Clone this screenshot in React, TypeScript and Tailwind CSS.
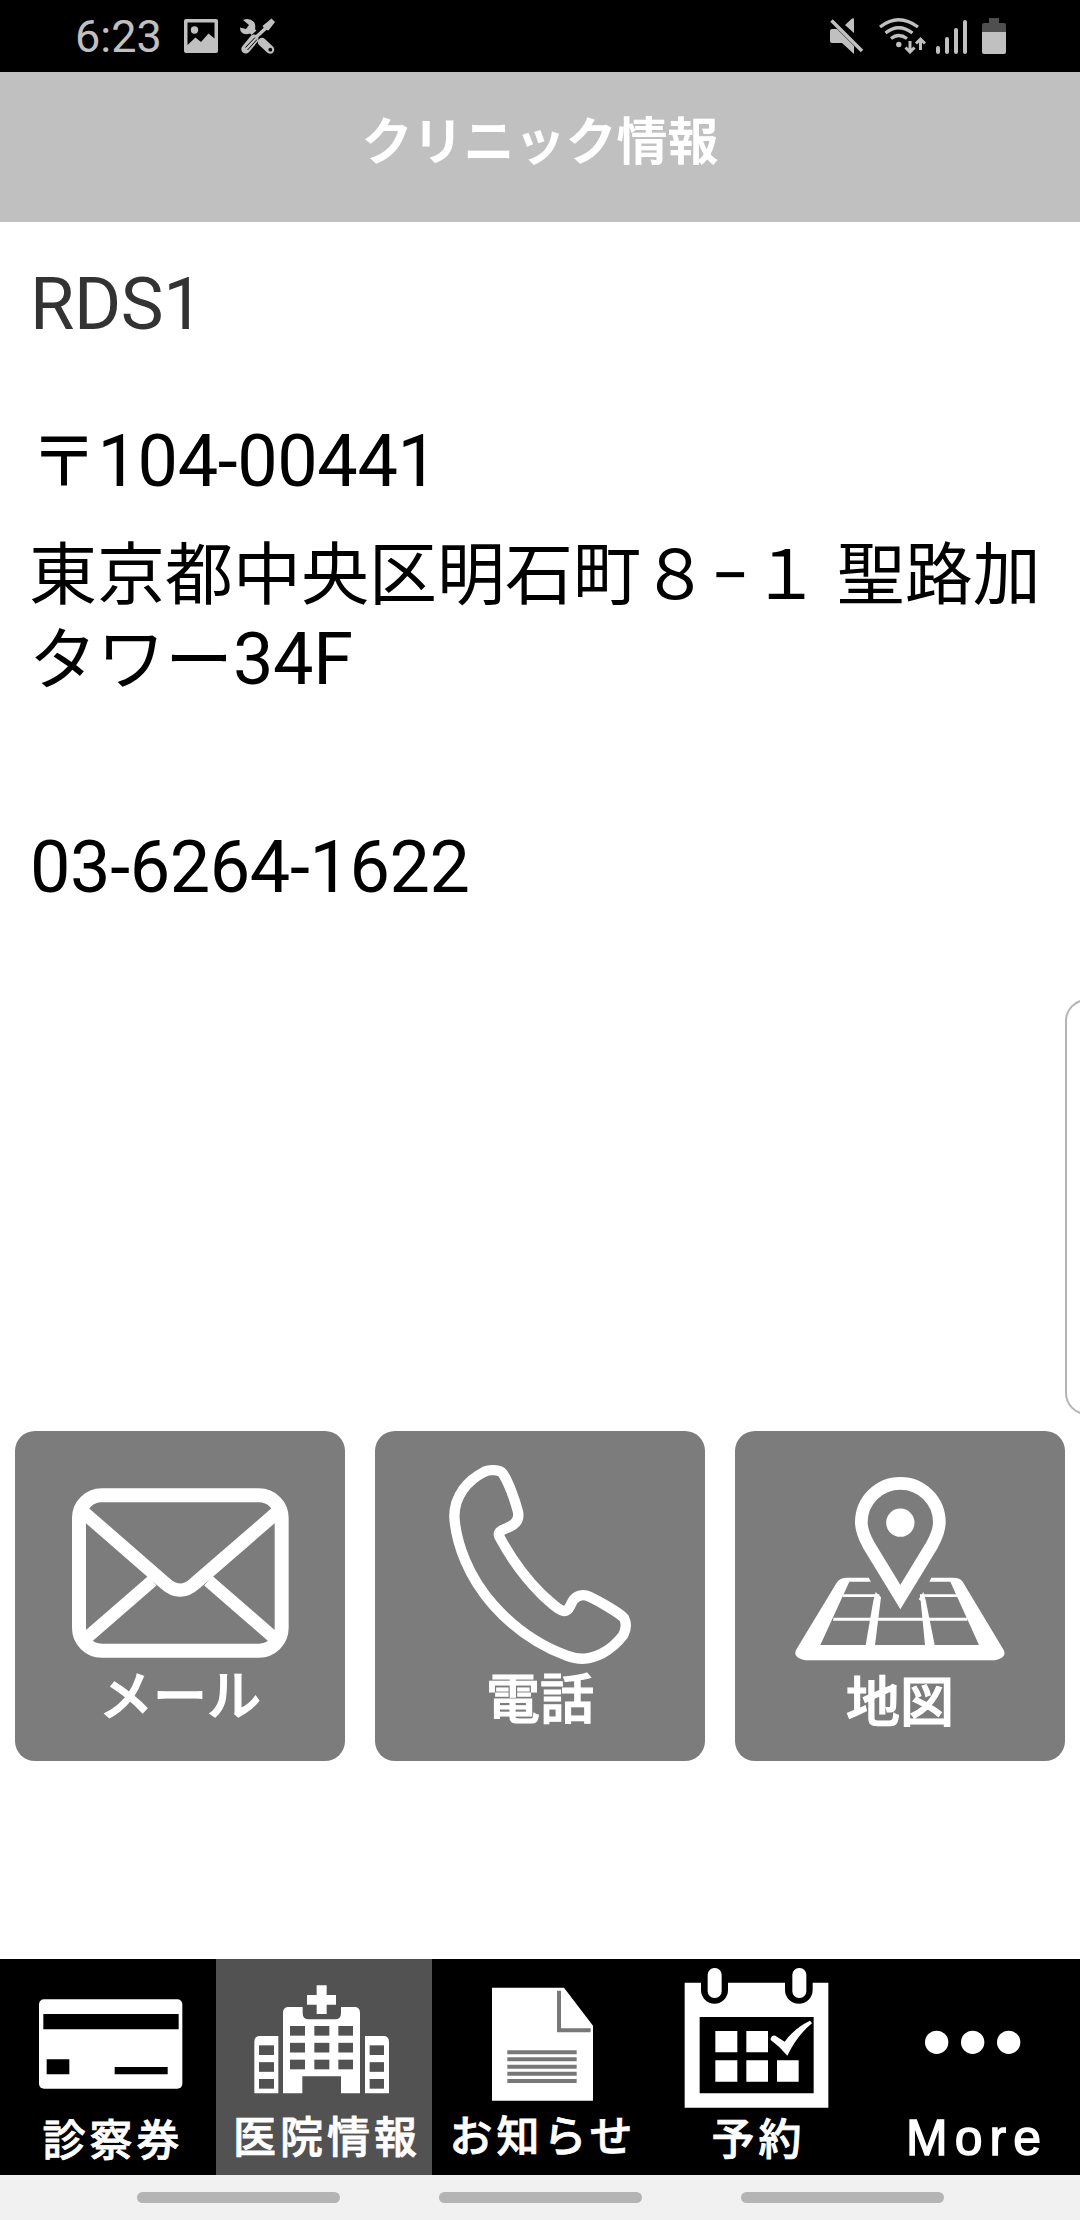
import type { ReactNode } from 'react';

const GRAY = '#c0c0c0';

function StatusBar() {
  return (
    <div className="flex h-[72px] items-center bg-black pl-[75px] pr-[74px]">
      <span className="w-[108px] pt-[2px] text-[45px] leading-[70px] text-[#c0c0c0]">6:23</span>
      {/* screenshot notification */}
      <svg width="36" height="36" viewBox="0 0 36 36" fill={GRAY}>
        <path
          fillRule="evenodd"
          d="M3 1H33Q35 1 35 3V33Q35 35 33 35H3Q1 35 1 33V3Q1 1 3 1ZM4.5 4.5V27L12.5 19.5L18 24L25.5 15.5L31.5 20.5V4.5Z"
        />
        <circle cx="11.5" cy="12" r="3.7" />
      </svg>
      {/* developer tools */}
      <svg width="37" height="37" viewBox="0 0 37 37" fill="none" className="ml-[20px]">
        <path d="M4 2Q10-1 15 4Q17 7 16 11L19 15L15 19L11 15.500Q5 18 1.500 13L1 9.500L7 11L10 7Z" fill={GRAY} />
        <path d="M23 24L31 31.500" stroke={GRAY} strokeWidth="8.500" strokeLinecap="round" />
        <circle cx="31.300" cy="31.700" r="1.900" fill="#000" />
        <path d="M14 21L31 6" stroke="#000" strokeWidth="8" />
        <path d="M6.800 31L15 21" stroke={GRAY} strokeWidth="9" strokeLinecap="round" />
        <path d="M15 21L27 10" stroke={GRAY} strokeWidth="3.500" />
        <path d="M26 11.500L23.500 8L32.500 .5L36 4L29.500 12.500Z" fill={GRAY} />
        <path d="M6.500 29.500L16 19.500M8.500 32L18 21.500" stroke="#000" strokeWidth="1" />
      </svg>
      <div className="ml-auto flex items-center">
        {/* muted */}
        <svg width="34" height="36" viewBox="0 0 34 36" fill={GRAY}>
          <path d="M0 13Q0 11 2 11H7L24 28V36L12 25H2Q0 25 0 23ZM15 7L22 .5H24V15Z" />
          <path d="M3 .5L34 31.500" stroke="#000" strokeWidth="3" />
          <path d="M1.500 2.500L32 33" stroke={GRAY} strokeWidth="3.500" />
        </svg>
        {/* wifi with traffic arrows */}
        <svg width="47" height="36" viewBox="0 0 47 36" fill="none" stroke={GRAY} strokeWidth="3.300" className="ml-[15px]">
          <path d="M1 9Q19.500-5.500 39 9M6.500 15Q19.500 4.500 33.500 15M12 20.500Q19.500 14.500 28 20.500" />
          <circle cx="19.800" cy="26.500" r="2.700" fill={GRAY} stroke="none" />
          <path d="M31 23V34M26.500 29.500L31 34L35.500 29.500M41.500 32V21M37 25.500L41.500 21L46 25.500" strokeWidth="3" />
        </svg>
        <svg width="31" height="36" viewBox="0 0 31 36" stroke={GRAY} strokeWidth="4" strokeLinecap="round" className="ml-[10px]">
          <path d="M2 30V34M11 21V34M20 12V34M29 4V34" />
        </svg>
        <svg width="24" height="36" viewBox="0 0 24 36" className="ml-[15px]">
          <path d="M7 0H17V5H22Q24 5 24 7V14H0V7Q0 5 2 5H7Z" fill="#4f4f4f" />
          <path d="M0 14H24V34Q24 36 22 36H2Q0 36 0 34Z" fill={GRAY} />
        </svg>
      </div>
    </div>
  );
}

function MailIcon() {
  return (
    <svg viewBox="45 63 990 720" className="h-[240px] w-[330px]" fill="none" stroke="#fff">
      <rect x="237" y="256" width="608" height="466" rx="68" strokeWidth="42" />
      <path d="M245 302L495 520Q540 561 585 520L837 302" strokeWidth="40" />
      <path d="M255 688L457 512M827 688L625 512" strokeWidth="38" />
    </svg>
  );
}

function PhoneIcon() {
  return (
    <svg viewBox="45 63 990 720" className="h-[240px] w-[330px]" fill="none" stroke="#fff">
      <path
        strokeWidth="31"
        strokeLinejoin="round"
        d="M372 186C325 210 283 255 283 320C288 400 325 500 400 585C480 675 560 715 620 737C660 752 690 748 725 731C755 715 775 695 790 675C800 655 800 640 792 624C780 610 720 575 688 560C668 550 650 558 640 570C630 585 628 603 612 603C600 603 580 585 545 553C500 508 450 440 418 380C412 365 425 360 445 352C470 342 478 325 474 305C465 270 445 215 428 190C420 178 385 178 372 186Z"
      />
    </svg>
  );
}

function MapIcon() {
  return (
    <svg viewBox="45 63 990 720" className="h-[240px] w-[330px]" fill="#fff">
      <path d="M541 561L446 405Q424 365 424 337A117 117 0 0 1 658 337Q658 365 636 405Z" fill="none" stroke="#fff" strokeWidth="38" />
      <circle cx="541" cy="338" r="42.500" />
      <path d="M378 503H446L453 515H388L301 705H777L691 515H628L634 503H700Q720 503 728 515L851 720Q862 742 825 751H255Q218 742 228 720L350 518Q358 505 378 503Z" />
      <path d="M370 553H478V561H368ZM600 553H712V561H600ZM341 623H742V632H339Z" />
      <path d="M467 546L483 562L465 705H437L460 572ZM596 568L610 546L617 570L644 705H615L602 572Z" />
    </svg>
  );
}

function CardIcon() {
  return (
    <svg viewBox="0 57 648 450" className="h-[150px] w-[216px]">
      <rect x="117" y="178" width="430" height="268" rx="15" fill="#fff" />
      <path d="M130 222H536V268H130ZM140 358H208V403H140ZM344 381H503V403H344Z" />
    </svg>
  );
}

function HospitalIcon() {
  const rows = [0, 1, 2];
  return (
    <svg viewBox="648 57 648 450" className="h-[150px] w-[216px]" fill="#fff">
      <path d="M849 460V218Q849 201 866 201H908V220Q908 238 926 238H1005Q1023 238 1023 220V201H1063Q1080 201 1080 218V460H1023V409H907V460Z" />
      <path d="M763 460V305Q763 288 780 288H835V460ZM1095 460V288H1150Q1167 288 1167 305V460Z" />
      <path d="M921 165H950V136H980V165H1008V194H980V222H950V194H921Z" />
      <g fill="#525252">
        {rows.map((r) => (
          <g key={r}>
            <rect x="870" y={258 + r * 50.5} width="45" height="29" />
            <rect x="943" y={258 + r * 50.5} width="45" height="29" />
            <rect x="1015" y={258 + r * 50.5} width="44" height="29" />
            <rect x="777" y={316 + r * 50.5} width="45" height="29" />
            <rect x="1109" y={316 + r * 50.5} width="43" height="29" />
          </g>
        ))}
      </g>
    </svg>
  );
}

function NewsIcon() {
  return (
    <svg viewBox="24 57 648 450" className="h-[150px] w-[216px]" fill="none">
      <path d="M204 143H420L507 257V482H204Z" fill="#fff" />
      <path d="M405 152V271H500M250 337H458M250 358H458M250 380H458M250 401H458M250 423H458" stroke="#787878" strokeWidth="12" />
    </svg>
  );
}

function CalendarIcon() {
  return (
    <svg viewBox="672 57 648 450" className="h-[150px] w-[216px]" fill="#fff">
      <path d="M782 128H1213V503H782Z" />
      <path d="M827 231H1169V460H827Z" fill="#000" />
      <path d="M831 120H912V150A40.500 41 0 0 1 831 150ZM1083 120H1166V150A41.500 41 0 0 1 1083 150Z" fill="#000" />
      <rect x="851" y="84" width="42" height="90" rx="20" />
      <rect x="1105" y="84" width="42" height="90" rx="20" />
      <path d="M874 273H940V337H874ZM967 273H1032V337H967ZM874 361H940V425H874ZM967 361H1032V425H967ZM1059 361H1124V425H1059Z" />
      <path d="M1040 296Q1044 284 1054 287L1082 305Q1112 264 1158 242L1164 250Q1120 285 1090 347Q1068 320 1040 300Z" />
    </svg>
  );
}

function MoreIcon() {
  return (
    <svg viewBox="342 57 648 450" className="h-[150px] w-[216px]" fill="#fff">
      <circle cx="560" cy="307" r="35" />
      <circle cx="668" cy="307" r="35" />
      <circle cx="776" cy="307" r="35" />
    </svg>
  );
}

const actions: { label: string; icon: ReactNode; cls: string }[] = [
  { label: 'メール', icon: <MailIcon />, cls: 'text-[54px]' },
  { label: '電話', icon: <PhoneIcon />, cls: 'text-[54px] pt-[3px]' },
  { label: '地図', icon: <MapIcon />, cls: 'text-[54px] pt-[6px]' },
];

const tabs: { label: string; icon: ReactNode; cls: string; active?: boolean }[] = [
  { label: '診察券', icon: <CardIcon />, cls: 'text-[43px] tracking-[4px] pl-[10px] pt-[5px] [-webkit-text-stroke:0.8px_white]' },
  { label: '医院情報', icon: <HospitalIcon />, cls: 'text-[43px] tracking-[4px] pl-[6px] pt-[2px] [-webkit-text-stroke:0.8px_white]', active: true },
  { label: 'お知らせ', icon: <NewsIcon />, cls: 'text-[43px] tracking-[4px] pl-[6px] pt-[1px] [-webkit-text-stroke:0.8px_white]' },
  { label: '予約', icon: <CalendarIcon />, cls: 'text-[43px] tracking-[4px] pl-[5px] pt-[4px] [-webkit-text-stroke:0.8px_white]' },
  {
    label: 'More',
    icon: <MoreIcon />,
    cls: "font-['Liberation_Sans',sans-serif] text-[50px] tracking-[7px] pl-[10px] pt-[2px] [-webkit-text-stroke:1.4px_white]",
  },
];

export default function App() {
  return (
    <div className="relative flex h-[2220px] w-[1080px] flex-col overflow-hidden bg-white font-[Roboto,'Noto_Sans_CJK_JP',sans-serif]">
      <StatusBar />
      <header className="flex h-[150px] justify-center bg-[#c0c0c0] pt-[34px]">
        <h1 className="text-[51px] font-bold leading-[74px] text-white">クリニック情報</h1>
      </header>

      <main className="flex flex-1 flex-col">
        <section className="h-[1209px] pl-[30px] pt-[41px] text-[72px] leading-[84px] tracking-[-0.4px] text-black">
          <p className="text-[#333]">RDS1</p>
          <p className="mt-[73px]">
            <span className="text-[68px] tracking-[-0.5px]">〒</span>104-00441
          </p>
          <p className="-ml-px mt-[28px] whitespace-nowrap">
            <span className="text-[68px] tracking-normal">
              東京都中央区明石町８<span className="px-[2px]">−</span>１ 聖路加
            </span>
            <br />
            <span className="text-[68px] tracking-normal">タワー</span>34F
          </p>
          <p className="mt-[123px]">03-6264-1622</p>
        </section>

        <div className="flex gap-[30px] px-[15px]">
          {actions.map((a) => (
            <button key={a.label} className="flex h-[330px] w-[330px] flex-col items-center rounded-[20px] bg-[#7c7c7c] text-white">
              {a.icon}
              <span className={`font-medium leading-[54px] [-webkit-text-stroke:1.2px_white] ${a.cls}`}>{a.label}</span>
            </button>
          ))}
        </div>
      </main>

      <nav className="flex h-[216px] bg-black">
        {tabs.map((t) => (
          <div
            key={t.label}
            className={`flex w-[216px] flex-col items-center whitespace-nowrap text-white ${t.active ? 'bg-[#525252]' : ''}`}
          >
            {t.icon}
            <span className={`font-medium leading-[54px] ${t.cls}`}>{t.label}</span>
          </div>
        ))}
      </nav>

      {/* gesture hints */}
      <div className="flex h-[45px] justify-center gap-[99px] bg-[#f1f1f1] pt-[17px]">
        <div className="h-[11px] w-[203px] rounded-full bg-[#b4b4b4]" />
        <div className="h-[11px] w-[203px] rounded-full bg-[#b4b4b4]" />
        <div className="h-[11px] w-[203px] rounded-full bg-[#b4b4b4]" />
      </div>

      {/* edge panel handle */}
      <div className="absolute -right-[10px] top-[999px] h-[416px] w-[25px] rounded-l-[22px] border-2 border-[#b4b4b4]" />
    </div>
  );
}
